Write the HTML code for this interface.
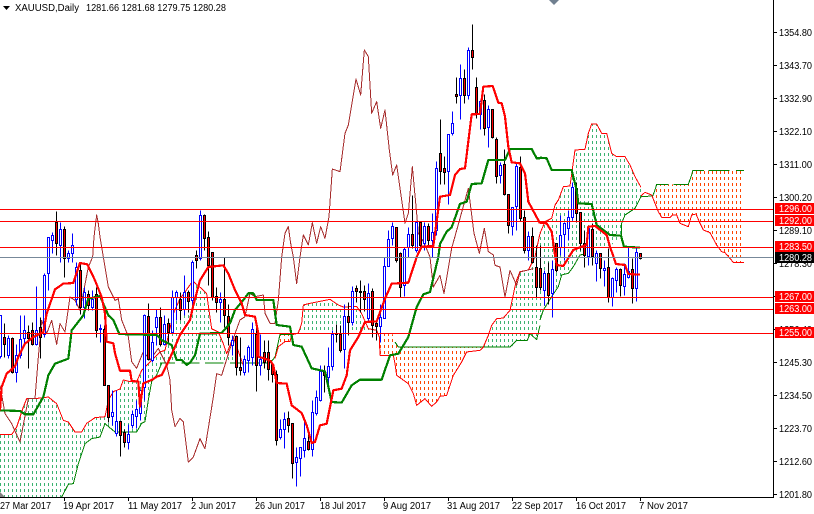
<!DOCTYPE html>
<html><head><meta charset="utf-8"><title>XAUUSD,Daily</title>
<style>
html,body{margin:0;padding:0;background:#fff;width:814px;height:514px;overflow:hidden}
svg{display:block}
polyline{fill:none;vector-effect:non-scaling-stroke;stroke-linejoin:round;shape-rendering:crispEdges}
.tk polyline{stroke:#f00;stroke-width:2.2}
.kj polyline{stroke:#008000;stroke-width:2.2}
.ch polyline{stroke:#a52a2a;stroke-width:1}
.ra polyline{stroke:#f00;stroke-width:1}
.rb polyline{stroke:#008000;stroke-width:1}
text{font-family:"Liberation Sans",sans-serif;font-size:10px;fill:#000}
.w{fill:#fff}
</style></head><body>
<svg width="814" height="514" viewBox="0 0 814 514" xmlns="http://www.w3.org/2000/svg">
<defs>
<pattern id="pg" patternUnits="userSpaceOnUse" width="4" height="6"><rect x="0" y="3" width="1" height="3" fill="#3cb371"/></pattern>
<pattern id="po" patternUnits="userSpaceOnUse" width="4" height="6"><rect x="0" y="3" width="1" height="3" fill="#ff4500"/></pattern>
<clipPath id="cg">
<polygon transform="translate(0,257) scale(.33333)" points="0,533 35,533 50,510 70,450 80,425 105,425 145,420 170,440 190,490 205,495 225,525 245,525 260,499 285,482 315,479 325,429 340,404 360,396 370,369 390,374 410,374 425,340 450,315 480,285 495,280 520,170 540,125 555,105 578,72 605,95 620,110 635,215 655,225 670,260 680,290 700,240 735,318 700,318 490,318 485,319 470,354 455,374 445,429 435,494 425,499 410,525 345,525 315,500 300,540 275,545 255,560 235,620 220,680 205,682 185,720 0,720"/>
<polygon transform="translate(270,257) scale(.33333)" points="65,234 85,228 95,199 100,144 120,139 180,127 205,144 220,150 260,148 275,170 295,215 320,220 320,230 85,230"/>
<polygon transform="translate(270,257) scale(.33333)" points="640,270 655,235 665,205 680,185 700,183 720,160 735,89 740,69 750,44 775,39 795,-1 810,-71 810,205 800,248 780,230 772,250 740,250 725,270"/>
<polygon transform="translate(540,100) scale(.33333)" points="0,400 15,365 35,355 45,315 55,300 70,260 90,258 105,150 135,148 145,100 155,72 170,72 185,100 200,100 215,160 230,170 255,170 270,195 285,230 303,262 303,290 285,325 255,345 245,370 245,405 210,440 170,440 130,463 120,465 100,500 85,520 65,525 55,560 35,590 10,630 0,660"/>
</clipPath>
<clipPath id="co">
<polygon transform="translate(270,257) scale(.33333)" points="30,232 65,232 60,254 45,254 25,269"/>
<polygon transform="translate(270,257) scale(.33333)" points="330,228 370,232 385,270 640,270 630,280 590,285 575,315 550,355 530,415 510,418 500,435 485,448 465,425 440,445 430,410 415,380 380,355 375,320 370,295 330,295"/>
<polygon transform="translate(540,100) scale(.33333)" points="303,290 335,288 345,270 350,253 445,253 455,212 612,212 612,487 580,487 555,458 545,455 530,435 510,398 490,390 480,370 468,342 455,345 445,380 420,370 410,345 398,345 390,353 365,352 355,335 335,285"/>
</clipPath>
</defs>
<rect width="814" height="514" fill="#fff"/>

<!-- cloud fill -->
<rect x="0" y="0" width="773" height="497" fill="url(#pg)" clip-path="url(#cg)"/>
<rect x="0" y="0" width="773" height="497" fill="url(#po)" clip-path="url(#co)"/>

<!-- senkou B edges -->
<g class="rb">
<g transform="translate(0,257) scale(.33333)">
<polyline points="185,720 205,682 220,680 235,620 255,560 275,545 300,540 315,500 345,525 395,525 410,525 425,499 435,494 445,429 455,374 470,354 485,319"/>
<polyline points="480,318 525,318"/><polyline points="545,318 598,318"/><polyline points="615,318 670,318"/><polyline points="690,318 810,318"/>
</g>
<g transform="translate(270,257) scale(.33333)">
<polyline points="0,318 15,300 25,255 30,232 65,232"/>
<polyline points="375,255 385,270 640,270 720,270 740,250 772,250 780,230 800,248 810,205"/>
</g>
<g transform="translate(540,100) scale(.33333)">
<polyline points="0,660 10,630 35,590 55,560 65,525 85,520 100,500 120,465 130,463"/>
<polyline points="245,405 245,370 255,345 285,325 303,290 338,288 345,270 350,253 385,253"/>
<polyline points="400,253 445,253 455,225 458,212 492,212"/><polyline points="505,212 568,212"/><polyline points="588,212 612,212"/>
</g>
</g>
<!-- senkou A edges -->
<g class="ra">
<g transform="translate(0,257) scale(.33333)">
<polyline points="0,533 35,533 50,510 70,450 80,425 105,425 145,420 170,440 190,490 205,495 225,525 245,525 260,499 285,482 315,479 325,429 340,404 360,396 370,369 390,374 410,374 425,340 450,315 480,285 495,280 520,170 540,125 555,105 578,72 605,95 620,110 635,215 655,225 670,260 680,290 700,240 735,340"/>
</g>
<g transform="translate(270,257) scale(.33333)">
<polyline points="15,304 25,269 45,254 60,254 65,234 85,228 95,199 100,144 120,139 180,127 205,144 220,150 260,148 275,170 295,215 320,220 328,240 330,295 370,295 375,320 380,355 415,380 430,410 440,445 465,425 485,448 500,435 510,418 530,415 550,355 575,315 590,285 630,280 640,270 655,235 665,205 680,185 700,183 720,160 735,89 740,69 750,44 775,39 795,-1 810,-71"/>
</g>
<g transform="translate(540,100) scale(.33333)">
<polyline points="0,400 15,365 35,355 45,315 55,300 70,260 90,258 105,150 135,148 145,100 155,72 170,72 185,100 200,100 215,160 230,170 255,170 270,195 285,230 303,262"/>
<polyline points="303,288 315,277 335,285 355,335 365,352 390,353 398,345 410,345 420,370 445,380 455,345 468,342 480,370 490,390 510,398 530,435 545,455 555,458 580,487 612,487"/>
</g>
</g>
<!-- chikou -->
<g class="ch">
<polyline transform="translate(0,257) scale(.33333)" points="0,385 15,470 35,500 60,555 85,425 105,425 115,300 125,190 140,230 155,190 170,262 180,200 195,225 210,120 225,130 240,160 265,30 278,0 282,-60 290,-126 295,-100 300,-60 310,0 325,90 345,130 355,125 365,189 385,239 395,314 410,334 430,284 450,309 475,274 500,324 510,369 515,459 525,509 540,484 550,495 565,615 580,600 600,545 615,575 640,420 650,350 665,355 690,275 705,230 720,189 735,179 750,109 765,119 790,114 795,169 810,199"/>
<polyline transform="translate(270,257) scale(.33333)" points="0,199 15,199 25,130 35,0"/>
<polyline transform="translate(270,0) scale(.33333)" points="35,771 45,700 55,680 62,730 70,771 80,851 90,771 100,705 115,735 127,668 140,730 152,680 165,715 177,650 187,507 210,515 225,400 235,375 258,237 272,285 283,150 295,170 305,340 320,305 332,385 345,330 358,450 368,525 380,495 405,670 415,640 427,500 440,640 445,700 463,730 480,771 490,861 510,826 522,881 545,745 595,565 612,700 628,760 643,685 655,755 670,765 675,796 690,801 705,891 720,811 740,856 750,816 790,806"/>
</g>

<!-- candles -->
<g transform="translate(.5,.5)" shape-rendering="crispEdges" stroke-width="1">
<path fill="none" stroke="#0000ff" d="M0 315V358M8 335V358M16 344V382M20 315V358M24 315V345M36 286V345M44 273V337M48 237V290M52 232V253M60 222V262M68 250V262M72 233V262M76 262V305M84 287V318M92 290V310M100 324V342M112 390V425M116 390V436M128 424V449M132 410V428M136 400V428M140 390V420M144 314V400M152 330V362M156 309V345M164 315V345M172 290V333M176 290V320M184 275V315M192 260V305M200 210V260M220 292V322M232 335V355M244 355V375M248 345V372M252 322V365M260 334V375M280 419V439M284 412V448M296 447V486M300 447V476M304 422V457M312 400V456M316 390V415M320 365V401M328 347V390M332 330V370M344 304V368M352 286V325M368 283V320M380 304V342M384 257V318M388 230V266M392 222V245M404 247V296M408 227V257M416 222V252M424 222V250M432 213V257M436 161V235M448 134V204M452 111V135M460 64V119M468 47V99M480 100V129M488 105V147M500 162V183M512 207V235M516 162V230M528 231V260M544 270V305M552 260V317M560 215V255M564 222V260M568 210V240M572 182V220M588 225V265M596 250V281M604 260V286M612 277V306M616 267V292M624 263V295M628 246V278M636 248V301"/>
<path fill="#fff" stroke="#0000ff" d="M-1 315H1V356H-1zM7 338H9V355H7zM15 355H17V372H15zM19 339H21V355H19zM23 330H25V338H23zM35 330H37V344H35zM43 275H45V334H43zM47 237H49V273H47zM51 235H53V240H51zM59 229H61V245H59zM67 253H69V258H67zM71 245H73V253H71zM75 267H77V299H75zM83 292H85V307H83zM91 299H93V307H91zM99 328H101V329H99zM111 412H113V416H111zM115 421H117V433H115zM127 434H129V442H127zM131 414H133V425H131zM135 409H137V416H135zM139 390H141V413H139zM143 315H145V387H143zM151 342H153V360H151zM155 317H157V327H155zM163 324H165V344H163zM171 297H173V332H171zM175 292H177V297H175zM183 292H185V309H183zM191 262H193V300H191zM199 215H201V258H199zM219 299H221V302H219zM231 340H233V345H231zM243 359H245V372H243zM247 347H249V360H247zM251 329H253V357H251zM259 359H261V365H259zM279 429H281V437H279zM283 419H285V429H283zM295 457H297V462H295zM299 447H301V458H299zM303 438H305V450H303zM311 412H313V449H311zM315 397H317V413H315zM319 371H321V400H319zM327 366H329V377H327zM331 334H333V366H331zM343 316H345V349H343zM351 291H353V322H351zM367 293H369V318H367zM379 317H381V326H379zM383 266H385V318H383zM387 239H389V266H387zM391 226H393V238H391zM403 249H405V285H403zM407 234H409V247H407zM415 222H417V250H415zM423 226H425V243H423zM431 232H433V240H431zM435 168H437V230H435zM447 134H449V171H447zM451 123H453V133H451zM459 78H461V95H459zM467 50H469V95H467zM479 101H481V114H479zM487 109H489V127H487zM499 165H501V175H499zM511 207H513V226H511zM515 166H517V206H515zM527 236H529V250H527zM543 273H545V290H543zM551 269H553V293H551zM559 235H561V247H559zM563 223H565V234H563zM567 217H569V228H567zM571 187H573V217H571zM587 228H589V256H587zM595 253H597V263H595zM603 268H605V270H603zM611 278H613V297H611zM615 269H617V280H615zM623 274H625V286H623zM627 271H629V277H627zM635 252H637V288H635z"/>
<path fill="none" stroke="#000" d="M4 323V357M12 337V373M28 325V368M32 322V345M40 317V358M56 211V255M64 226V277M80 262V314M88 290V310M96 287V337M104 325V385M108 385V422M120 420V456M124 429V447M148 303V360M160 307V346M168 318V342M180 292V320M188 290V312M196 250V268M204 214V250M208 231V285M212 252V300M216 287V312M224 257V327M228 304V345M236 335V375M240 337V375M256 320V391M264 340V368M268 340V380M272 363V382M276 370V445M288 411V432M292 423V478M308 434V450M324 365V392M336 324V342M340 325V352M348 302V335M356 285V302M360 280V312M364 285V311M372 288V337M376 322V340M396 227V262M400 252V297M412 195V248M420 222V250M428 223V245M440 119V184M444 156V184M456 77V103M464 69V103M472 24V69M476 77V118M484 94V135M492 109V138M496 137V183M504 149V195M508 194V233M520 156V221M524 210V253M532 227V262M536 245V297M540 245V290M548 262V304M556 243V272M576 182V222M580 212V250M584 230V267M592 223V265M600 253V278M608 248V302M620 268V296M632 258V303M640 253V259"/>
<path fill="#f00" stroke="#000" d="M3 337H5V344H3zM11 338H13V372H11zM27 332H29V338H27zM31 330H33V344H31zM39 327H41V337H39zM55 222H57V243H55zM63 229H65V258H63zM79 270H81V307H79zM87 294H89V305H87zM95 294H97V330H95zM103 329H105V385H103zM107 385H109V417H107zM119 421H121V435H119zM123 432H125V442H123zM147 316H149V359H147zM159 317H161V344H159zM167 323H169V332H167zM179 299H181V310H179zM187 292H189V301H187zM195 255H197V260H195zM203 215H205V238H203zM207 237H209V265H207zM211 252H213V297H211zM215 296H217V302H215zM223 299H225V315H223zM227 316H229V337H227zM235 336H237V367H235zM239 367H241V370H239zM255 334H257V365H255zM263 352H265V362H263zM267 352H269V369H267zM271 364H273V374H271zM275 374H277V440H275zM287 418H289V425H287zM291 423H293V463H291zM307 441H309V449H307zM323 371H325V375H323zM335 333H337V334H335zM339 334H341V350H339zM347 316H349V322H347zM355 288H357V291H355zM359 291H361V292H359zM363 291H365V299H363zM371 291H373V325H371zM375 323H377V326H375zM395 227H397V260H395zM399 253H401V287H399zM411 234H413V245H411zM419 222H421V245H419zM427 226H429V240H427zM439 153H441V171H439zM443 168H445V172H443zM455 94H457V96H455zM463 78H465V95H463zM471 50H473V57H471zM475 87H477V113H475zM483 100H485V128H483zM491 109H493V137H491zM495 139H497V176H495zM503 164H505V194H503zM507 194H509V225H507zM519 167H521V218H519zM523 217H525V250H523zM531 236H533V262H531zM535 267H537V287H535zM539 268H541V287H539zM547 273H549V295H547zM555 243H557V270H555zM575 188H577V213H575zM579 212H581V243H579zM583 243H585V255H583zM591 229H593V256H591zM599 253H601V268H599zM607 267H609V297H607zM619 269H621V285H619zM631 269H633V288H631zM639 253H641V258H639z"/>
</g>

<!-- kijun -->
<g class="kj">
<polyline transform="translate(0,257) scale(.33333)" points="0,460 60,462 75,472 100,472 130,420 145,355 165,320 205,305 215,220 250,175 265,125 300,117 325,175 340,189 358,231 470,234 485,249 515,264 530,309 545,309 560,324 570,317 585,295 600,230 665,228 690,199 705,159 730,129 745,109 760,109 770,129 810,129"/>
<polyline transform="translate(270,257) scale(.33333)" points="0,129 10,129 20,204 60,209 70,264 95,269 125,334 165,343 185,435 215,437 245,385 270,368 335,368 360,295 385,290 415,240 440,150 460,112 480,105 505,0"/>
<polyline transform="translate(270,0) scale(.33333)" points="505,771 510,732 530,695 545,682 570,612 590,605 605,552 635,550 655,480 705,480 720,447 785,447 800,475 810,475"/>
<polyline transform="translate(540,100) scale(.33333)" points="0,173 20,175 35,210 95,210 110,270 115,310 155,312 170,375 210,405 243,407 252,440 300,443"/>
</g>
<!-- tenkan -->
<g class="tk">
<polyline transform="translate(0,257) scale(.33333)" points="0,460 5,390 20,350 45,328 55,300 75,260 100,240 130,225 140,170 165,97 190,80 220,78 240,18 262,22 285,70 305,120 315,170 320,254 340,259 345,289 355,324 360,341 390,341 395,372 415,374 420,449 430,379 455,369 470,359 485,354 505,314 525,269 540,234 570,189 580,145 600,70 625,30 670,25 685,50 705,99 725,139 735,174 765,179 775,229 775,299 810,310"/>
<polyline transform="translate(270,257) scale(.33333)" points="0,310 10,325 20,378 50,380 65,445 95,468 110,505 125,558 135,555 150,505 170,500 190,400 215,395 230,355 240,280 265,240 285,195 320,193 345,125 365,80 415,77 440,0"/>
<polyline transform="translate(270,0) scale(.33333)" points="440,771 455,740 490,738 510,590 540,585 555,525 570,507 585,505 605,343 630,342 640,260 668,258 685,308 695,310 705,350 715,440 725,487 750,490 765,520 775,605 810,670"/>
<polyline transform="translate(540,100) scale(.33333)" points="0,368 20,370 35,395 45,465 50,495 70,498 100,450 125,440 140,435 145,380 165,378 200,405 210,440 228,492 255,495 265,522 300,524"/>
</g>

<!-- horizontal lines -->
<g shape-rendering="crispEdges">
<rect x="0" y="257" width="774" height="1" fill="#778899"/>
<rect x="0" y="209" width="774" height="1" fill="#f00"/>
<rect x="0" y="221" width="774" height="1" fill="#f00"/>
<rect x="0" y="247" width="774" height="1" fill="#f00"/>
<rect x="0" y="297" width="774" height="1" fill="#f00"/>
<rect x="0" y="309" width="774" height="1" fill="#f00"/>
<rect x="0" y="333" width="774" height="1" fill="#f00"/>
</g>

<!-- axes -->
<g shape-rendering="crispEdges" fill="#000">
<rect x="773" y="0" width="1" height="498"/>
<rect x="0" y="497" width="774" height="1"/>
<rect x="774" y="32" width="3" height="1"/><rect x="774" y="65" width="3" height="1"/><rect x="774" y="98" width="3" height="1"/><rect x="774" y="131" width="3" height="1"/><rect x="774" y="164" width="3" height="1"/><rect x="774" y="197" width="3" height="1"/><rect x="774" y="230" width="3" height="1"/><rect x="774" y="263" width="3" height="1"/><rect x="774" y="296" width="3" height="1"/><rect x="774" y="329" width="3" height="1"/><rect x="774" y="362" width="3" height="1"/><rect x="774" y="395" width="3" height="1"/><rect x="774" y="428" width="3" height="1"/><rect x="774" y="461" width="3" height="1"/><rect x="774" y="494" width="3" height="1"/>
<rect x="64" y="498" width="1" height="3"/><rect x="128" y="498" width="1" height="3"/><rect x="192" y="498" width="1" height="3"/><rect x="256" y="498" width="1" height="3"/><rect x="320" y="498" width="1" height="3"/><rect x="384" y="498" width="1" height="3"/><rect x="448" y="498" width="1" height="3"/><rect x="512" y="498" width="1" height="3"/><rect x="576" y="498" width="1" height="3"/><rect x="640" y="498" width="1" height="3"/>
</g>
<polygon points="549,0 559,0 554,5" fill="#708090"/>
<polygon points="0,492 5,497 0,497" fill="#808080"/>
<polygon points="3,6 10,6 6.5,10" fill="#000"/>

<!-- title -->
<text x="15" y="11" textLength="64" lengthAdjust="spacingAndGlyphs">XAUUSD,Daily</text>
<text x="86" y="11" textLength="140" lengthAdjust="spacingAndGlyphs">1281.66 1281.68 1279.75 1280.28</text>

<!-- price labels -->
<g>
<text x="779" y="36" textLength="33" lengthAdjust="spacingAndGlyphs">1354.80</text>
<text x="779" y="69" textLength="33" lengthAdjust="spacingAndGlyphs">1343.70</text>
<text x="779" y="102" textLength="33" lengthAdjust="spacingAndGlyphs">1332.90</text>
<text x="779" y="135" textLength="33" lengthAdjust="spacingAndGlyphs">1322.10</text>
<text x="779" y="168" textLength="33" lengthAdjust="spacingAndGlyphs">1311.00</text>
<text x="779" y="201" textLength="33" lengthAdjust="spacingAndGlyphs">1300.20</text>
<text x="779" y="234" textLength="33" lengthAdjust="spacingAndGlyphs">1289.10</text>
<text x="779" y="267" textLength="33" lengthAdjust="spacingAndGlyphs">1278.30</text>
<text x="779" y="300" textLength="33" lengthAdjust="spacingAndGlyphs">1267.20</text>
<text x="779" y="333" textLength="33" lengthAdjust="spacingAndGlyphs">1256.40</text>
<text x="779" y="366" textLength="33" lengthAdjust="spacingAndGlyphs">1245.30</text>
<text x="779" y="399" textLength="33" lengthAdjust="spacingAndGlyphs">1234.50</text>
<text x="779" y="432" textLength="33" lengthAdjust="spacingAndGlyphs">1223.70</text>
<text x="779" y="465" textLength="33" lengthAdjust="spacingAndGlyphs">1212.60</text>
<text x="779" y="498" textLength="33" lengthAdjust="spacingAndGlyphs">1201.80</text>
</g>
<g shape-rendering="crispEdges">
<rect x="775" y="203" width="39" height="11" fill="#f00"/>
<rect x="775" y="215" width="39" height="11" fill="#f00"/>
<rect x="775" y="241" width="39" height="11" fill="#f00"/>
<rect x="775" y="252" width="39" height="11" fill="#000"/>
<rect x="775" y="291" width="39" height="11" fill="#f00"/>
<rect x="775" y="303" width="39" height="11" fill="#f00"/>
<rect x="775" y="327" width="39" height="11" fill="#f00"/>
</g>
<g>
<text class="w" x="779" y="212" textLength="33" lengthAdjust="spacingAndGlyphs">1296.00</text>
<text class="w" x="779" y="224" textLength="33" lengthAdjust="spacingAndGlyphs">1292.00</text>
<text class="w" x="779" y="250" textLength="33" lengthAdjust="spacingAndGlyphs">1283.50</text>
<text class="w" x="779" y="261" textLength="33" lengthAdjust="spacingAndGlyphs">1280.28</text>
<text class="w" x="779" y="300" textLength="33" lengthAdjust="spacingAndGlyphs">1267.00</text>
<text class="w" x="779" y="312" textLength="33" lengthAdjust="spacingAndGlyphs">1263.00</text>
<text class="w" x="779" y="336" textLength="33" lengthAdjust="spacingAndGlyphs">1255.00</text>
</g>

<!-- date labels -->
<g>
<text x="0" y="509" textLength="51" lengthAdjust="spacingAndGlyphs">27 Mar 2017</text>
<text x="63" y="509" textLength="51" lengthAdjust="spacingAndGlyphs">19 Apr 2017</text>
<text x="128" y="509" textLength="54" lengthAdjust="spacingAndGlyphs">11 May 2017</text>
<text x="191" y="509" textLength="45" lengthAdjust="spacingAndGlyphs">2 Jun 2017</text>
<text x="255" y="509" textLength="50" lengthAdjust="spacingAndGlyphs">26 Jun 2017</text>
<text x="320" y="509" textLength="46" lengthAdjust="spacingAndGlyphs">18 Jul 2017</text>
<text x="383" y="509" textLength="48" lengthAdjust="spacingAndGlyphs">9 Aug 2017</text>
<text x="447" y="509" textLength="53" lengthAdjust="spacingAndGlyphs">31 Aug 2017</text>
<text x="512" y="509" textLength="51" lengthAdjust="spacingAndGlyphs">22 Sep 2017</text>
<text x="576" y="509" textLength="50" lengthAdjust="spacingAndGlyphs">16 Oct 2017</text>
<text x="639" y="509" textLength="49" lengthAdjust="spacingAndGlyphs">7 Nov 2017</text>
</g>
</svg>
</body></html>
